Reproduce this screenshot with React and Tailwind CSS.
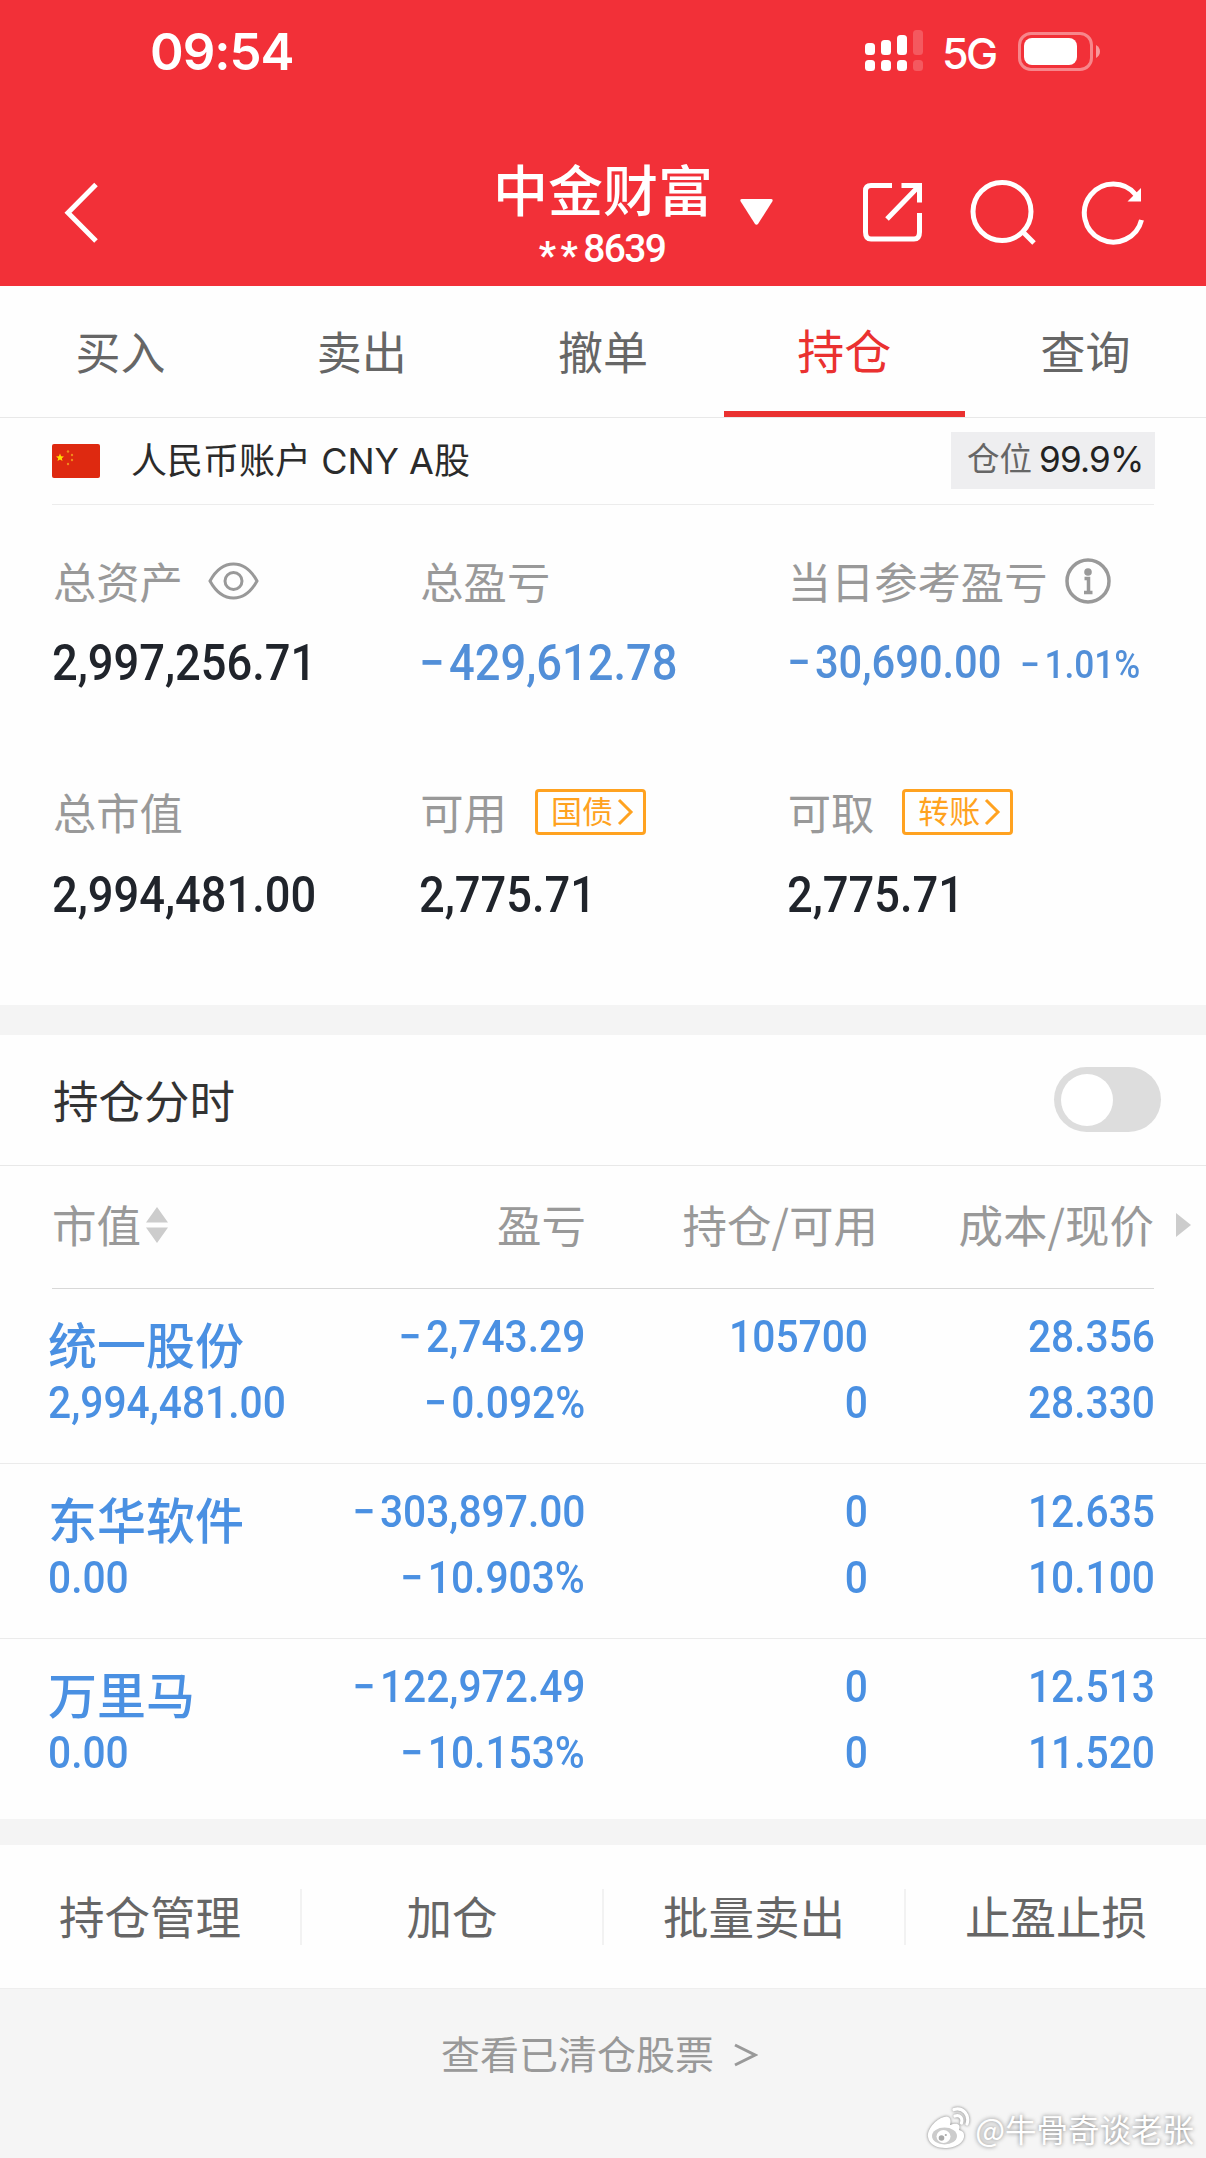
import { useState } from 'react';
import clsx from 'clsx';

const tabs = ['买入', '卖出', '撤单', '持仓', '查询'];
const actions = ['持仓管理', '加仓', '批量卖出', '止盈止损'];

const holdings = [
  { name: '统一股份', value: '2,994,481.00', profit: '−2,743.29', rate: '−0.092%', amount: '105700', usable: '0', cost: '28.356', price: '28.330' },
  { name: '东华软件', value: '0.00', profit: '−303,897.00', rate: '−10.903%', amount: '0', usable: '0', cost: '12.635', price: '10.100' },
  { name: '万里马', value: '0.00', profit: '−122,972.49', rate: '−10.153%', amount: '0', usable: '0', cost: '12.513', price: '11.520' },
];

// condensed figures, used for every amount on the page
const Num = ({ children, right, className }) => {
  const negative = children.startsWith('−');
  return (
    <span
      className={clsx(
        "block whitespace-nowrap font-['Roboto','Noto_Sans_CJK_SC',sans-serif] font-medium scale-x-[0.905]",
        right ? 'origin-right' : 'origin-left',
        className
      )}
    >
      {negative && <span className="tracking-[5px]">−</span>}
      {negative ? children.slice(1) : children}
    </span>
  );
};

const StatusBar = () => (
  <div className="flex h-[102px] items-center pl-[150px] pr-[106px] font-['Inter',sans-serif] text-white">
    <span className="text-[51px] font-semibold leading-none tracking-[-1px]">09:54</span>
    <svg className="ml-auto" width="58" height="42" viewBox="0 0 58 42" fill="#fff">
      <rect x="0" y="13" width="10" height="12" rx="3.5" />
      <rect x="16" y="10" width="10" height="15" rx="3.5" />
      <rect x="32" y="5" width="10" height="20" rx="3.5" />
      <rect x="48" y="0" width="10" height="25" rx="3.5" opacity="0.2" />
      <rect x="0" y="30" width="10" height="11" rx="3.5" />
      <rect x="16" y="30" width="10" height="11" rx="3.5" />
      <rect x="32" y="30" width="10" height="11" rx="3.5" />
      <rect x="48" y="30" width="10" height="11" rx="3.5" opacity="0.2" />
    </svg>
    <span className="ml-[19px] mt-1 w-[56px] text-[43px] font-medium leading-none tracking-[-2.500px]">5G</span>
    <svg className="ml-5" width="82" height="39" viewBox="0 0 82 39">
      <rect x="1.5" y="1.5" width="72" height="36" rx="11.5" fill="none" stroke="#fff" strokeWidth="3" opacity="0.42" />
      <rect x="6" y="6" width="53" height="27" rx="8" fill="#fff" />
      <path d="M78 13c2.6 1.4 4 3.8 4 6.500s-1.400 5.100-4 6.500z" fill="#fff" opacity="0.5" />
    </svg>
  </div>
);

const Header = () => (
  <header className="h-[286px] bg-[#f23038]">
    <StatusBar />
    <div className="flex h-[184px] items-start text-white">
      <svg className="ml-[63px] mt-[79px]" width="36" height="64" viewBox="0 0 36 64" fill="none" stroke="#fff" strokeWidth="5">
        <path d="M33 3.500L5 31.800L33 60" />
      </svg>
      <div className="ml-[394px] mt-[57px] w-[218px] text-center">
        <div className="whitespace-nowrap text-[55px] font-medium leading-[56px]">中金财富</div>
        <div className="mt-[10px] flex h-[48px] items-center justify-center font-['Roboto',sans-serif] text-[39px] font-medium">
          <span className="mr-[1px] mt-[14px] text-[38px] font-bold tracking-[4.500px]">**</span>
          <span className="tracking-[-1.700px]">8639</span>
        </div>
      </div>
      <svg className="ml-[29px] mt-[96px]" width="33" height="28" viewBox="0 0 33 28" fill="#fff">
        <path d="M2 1h29q2.500 0 1.300 2.500L18.300 25.500q-1.800 2.400-3.600 0L0.700 3.500Q-.5 1 2 1z" />
      </svg>
      <svg className="ml-[89px] mt-[78px]" width="61" height="62" viewBox="0 0 61 62" fill="none" stroke="#fff" strokeWidth="5">
        <path d="M30 5.500H9Q3.500 5.500 3.500 11V52Q3.500 59 9 59H52Q57.500 59 57.500 52V33" />
        <path d="M39.500 5.500H57.500V22.500M57 6L25 39" />
      </svg>
      <svg className="ml-[47px] mt-[77px]" width="68" height="67" viewBox="0 0 68 67" fill="none" stroke="#fff" strokeWidth="5">
        <circle cx="32" cy="32.500" r="29" />
        <path d="M53 53L64 64" />
      </svg>
      <svg className="ml-[43px] mt-[77px]" width="64" height="67" viewBox="0 0 64 67" fill="none" stroke="#fff" strokeWidth="5">
        <path d="M60.500 41A29 29 0 1 1 55 16" />
        <path d="M60 9V22.500H46.500z" fill="#fff" stroke="none" />
      </svg>
    </div>
  </header>
);

const Stat = ({ label, extra, children }) => (
  <div>
    <div className="flex h-[48px] items-center text-[43.300px] leading-[48px] text-[#999]">
      <span className="ml-[1px] whitespace-nowrap">{label}</span>
      {extra}
    </div>
    {children}
  </div>
);

const Tag = ({ children }) => (
  <span className="ml-[28px] mt-[2px] flex h-[46px] w-[111px] items-center rounded-[4px] border-3 border-[#ffa220] pl-[13px] text-[31px] leading-[40px] text-[#ffa220]">
    <span className="-mt-[4px]">{children}</span>
    <svg className="ml-[4px]" width="17" height="28" viewBox="0 0 17 28" fill="none" stroke="#ffa220" strokeWidth="3">
      <path d="M2 2L14 14L2 26" />
    </svg>
  </span>
);

const EyeIcon = () => (
  <svg className="ml-[25px] mt-[2px]" width="51" height="38" viewBox="0 0 51 38" fill="none" stroke="#999" strokeWidth="3">
    <path d="M2 19C8 8 16 2 25.500 2S43 8 49 19C43 30 35 36 25.500 36S8 30 2 19z" />
    <circle cx="25.500" cy="19" r="8.500" />
  </svg>
);

const InfoIcon = () => (
  <svg className="ml-[18px] mt-[2px]" width="46" height="46" viewBox="0 0 46 46" fill="none" stroke="#999" strokeWidth="3.500">
    <circle cx="23" cy="23" r="21" />
    <circle cx="23" cy="14" r="3.800" fill="#999" stroke="none" />
    <path d="M19.500 20.500H23.500V34M19 34.500H27.500" strokeWidth="3.500" />
  </svg>
);

const Account = () => (
  <section className="px-[52px]">
    <div className="flex h-[87px] items-center border-b border-[#ececec]">
      <svg width="48" height="34" viewBox="0 0 48 34">
        <rect width="48" height="34" rx="2" fill="#de2910" />
        <path d="M8 9.500l1.100 2.700 2.900.2-2.200 1.900.7 2.800L8 15.500l-2.500 1.600.7-2.800L4 12.400l2.900-.2z" fill="#ffde00" />
        <g fill="#f08a1c">
          <circle cx="16" cy="7.500" r="1.200" />
          <circle cx="20" cy="11" r="1.200" />
          <circle cx="20" cy="16" r="1.200" />
          <circle cx="16" cy="20" r="1.200" />
        </g>
      </svg>
      <span className="-mt-[1px] ml-[31px] whitespace-nowrap font-['Inter','Noto_Sans_CJK_SC',sans-serif] text-[36px] text-[#2b2b2b]">
        人民币账户 CNY A股
      </span>
      <div className="-mr-[1px] -mt-[2px] ml-auto flex h-[57px] w-[204px] items-center bg-[#eeeef0] pl-[16px]">
        <span className="-mt-[5px] text-[32.500px] text-[#666]">仓位</span>
        <span className="-mt-[2px] ml-[7px] font-['Inter',sans-serif] text-[35px] tracking-[-0.800px] text-[#222]">99.9%</span>
      </div>
    </div>

    <div className="grid grid-cols-3 pt-[51px] text-[50px] leading-[60px]">
      <Stat label="总资产" extra={<EyeIcon />}>
        <Num className="mt-[29px] text-[#20242b]">2,997,256.71</Num>
      </Stat>
      <Stat label="总盈亏">
        <Num className="mt-[29px] text-[#528fd8]">−429,612.78</Num>
      </Stat>
      <Stat label="当日参考盈亏" extra={<InfoIcon />}>
        <div className="mt-[28px] flex items-baseline text-[#528fd8]">
          <Num className="w-[233px] text-[46px]">−30,690.00</Num>
          <Num className="text-[39px]">−1.01%</Num>
        </div>
      </Stat>
    </div>

    <div className="grid grid-cols-3 pt-[92px] text-[50px] leading-[60px] text-[#20242b]">
      <Stat label="总市值">
        <Num className="mt-[30px]">2,994,481.00</Num>
      </Stat>
      <Stat label="可用" extra={<Tag>国债</Tag>}>
        <Num className="mt-[30px]">2,775.71</Num>
      </Stat>
      <Stat label="可取" extra={<Tag>转账</Tag>}>
        <Num className="mt-[30px]">2,775.71</Num>
      </Stat>
    </div>
  </section>
);

const HoldingRow = ({ item, last }) => (
  <div
    className={clsx(
      'grid grid-cols-[290px_247px_283px_287px] pl-[48px] text-[45px] leading-[66px] text-[#4a90e2]',
      last ? 'h-[180px]' : 'h-[175px] border-b border-[#ebebeb]'
    )}
  >
    <div className="pt-[18px]">
      <div className="h-[62px] whitespace-nowrap text-[49px] font-medium leading-[72px]">{item.name}</div>
      <Num className="pt-[1px]">{item.value}</Num>
    </div>
    <div className="pt-[15px]">
      <div className="flex justify-end"><Num right>{item.profit}</Num></div>
      <div className="flex justify-end"><Num right>{item.rate}</Num></div>
    </div>
    <div className="pt-[15px]">
      <Num right className="text-right">{item.amount}</Num>
      <Num right className="text-right">{item.usable}</Num>
    </div>
    <div className="pt-[15px]">
      <Num right className="text-right">{item.cost}</Num>
      <Num right className="text-right">{item.price}</Num>
    </div>
  </div>
);

export default function App() {
  const [activeTab, setActiveTab] = useState('持仓');
  const [showChart, setShowChart] = useState(false);

  return (
    <div className="relative flex h-[2158px] w-[1206px] flex-col overflow-hidden bg-[#fefefe] font-['Noto_Sans_CJK_SC',sans-serif]">
      <Header />

      <nav className="flex h-[132px] border-b border-[#e8e8e8]">
        {tabs.map((tab) => (
          <button
            key={tab}
            onClick={() => setActiveTab(tab)}
            className={clsx(
              'flex-1 border-b-6 pt-[4px] leading-[118px]',
              tab === activeTab
                ? 'border-[#ea3130] pb-[3px] text-[47px] text-[#ea3130]'
                : 'border-transparent text-[45px] text-[#666]'
            )}
          >
            {tab}
          </button>
        ))}
      </nav>

      <Account />

      {/* Intraday chart switch */}
      <section className="mt-auto border-t-[30px] border-[#f4f4f4]">
        <div className="flex h-[131px] items-center border-b border-[#e8e8e8] pl-[53px] pr-[45px]">
          <span className="-mt-[2px] text-[45.500px] text-[#333]">持仓分时</span>
          <button
            onClick={() => setShowChart(!showChart)}
            className={clsx(
              '-mt-[1px] ml-auto flex h-[65px] w-[107px] items-center rounded-full px-[7px]',
              showChart ? 'justify-end bg-[#ea3130]' : 'bg-[#ddd]'
            )}
          >
            <span className="size-[52px] rounded-full bg-white" />
          </button>
        </div>
      </section>

      {/* Holdings */}
      <section>
        <div className="mx-[52px] grid h-[123px] grid-cols-[286px_248px_292px_276px] items-center border-b border-[#d8d8d8] text-[44.500px] text-[#999]">
          <div className="flex items-center">
            <span className="-mt-[6px]">市值</span>
            <svg className="-mt-[4px] ml-[5px]" width="22" height="36" viewBox="0 0 22 36" fill="#ccc">
              <path d="M11 0L22 15.500H0zM0 20.500H22L11 36z" />
            </svg>
          </div>
          <span className="-mt-[6px] text-right">盈亏</span>
          <span className="-mt-[6px] text-right">持仓/可用</span>
          <div className="relative">
            <span className="-mt-[6px] block text-right">成本/现价</span>
            <svg className="absolute -right-[37px] top-[16px]" width="15" height="24" viewBox="0 0 15 24" fill="#ccc">
              <path d="M0 0L15 12L0 24z" />
            </svg>
          </div>
        </div>
        {holdings.map((item, i) => (
          <HoldingRow key={item.name} item={item} last={i === holdings.length - 1} />
        ))}
      </section>

      <div className="flex h-[169px] items-center border-t-[26px] border-[#f4f4f4]">
        {actions.map((action, i) => (
          <button
            key={action}
            className={clsx(
              'h-[56px] flex-1 pb-[4px] text-[45.500px] leading-[50px] text-[#666]',
              i < actions.length - 1 && 'border-r-2 border-[#f2f2f2]'
            )}
          >
            {action}
          </button>
        ))}
      </div>

      <footer className="flex h-[170px] justify-center border-t border-[#eee] bg-[#f5f5f5] pr-[7px] pt-[34px] text-[39px] leading-[58px] text-[#999]">
        <span className="mr-[20px]">查看已清仓股票</span>
        <svg className="mt-[20px]" width="24" height="24" viewBox="0 0 24 24" fill="none" stroke="#999" strokeWidth="3">
          <path d="M1 2L21 12L1 22" />
        </svg>
      </footer>

      {/* Watermark */}
      <div className="absolute bottom-[7px] right-[12px] flex items-center text-[31.500px] leading-[46px] text-white [text-shadow:0_0_4px_#777]">
        <svg className="mr-[5px] drop-shadow-[0_0_1.500px_#777]" width="43" height="42" viewBox="0 0 43 42" fill="none">
          <path d="M17 10C9 12 0 22 1 30C2 38 11 41 18 41C29 41 38 35 37 28C37 25 35 24 32 23C34 18 31 15 23 18C25 12 22 8 17 10z" fill="#fff" />
          <ellipse cx="17.500" cy="29" rx="12.500" ry="8.500" fill="#ccc" />
          <ellipse cx="16.500" cy="29.500" rx="7" ry="6.500" fill="#fff" />
          <circle cx="14.500" cy="31" r="2.800" fill="#aaa" />
          <circle cx="18.800" cy="28" r="1.100" fill="#aaa" />
          <path d="M27 2.500C36 0 43 8 40 17M28 9C33 7.500 36 11 34.500 16" stroke="#fff" strokeWidth="3.200" strokeLinecap="round" />
        </svg>
        <span>@牛骨奇谈老张</span>
      </div>
    </div>
  );
}
